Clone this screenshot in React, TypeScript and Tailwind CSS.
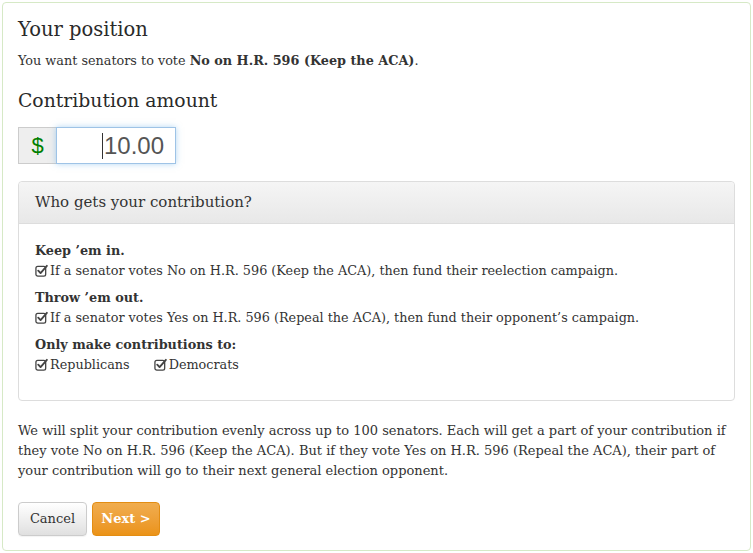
import React from "react";

const CheckIcon = () => (
  <svg width="13" height="13" viewBox="0 0 14 14" className="inline-block mr-[2px] -mt-[2px] align-middle" aria-hidden>
    <rect x="1" y="2.5" width="10.5" height="10.5" rx="2" fill="none" stroke="#444" strokeWidth="1.4" />
    <path d="M3.5 7.2 L6 9.8 L12.8 2" fill="none" stroke="#444" strokeWidth="2" strokeLinecap="round" strokeLinejoin="round" />
  </svg>
);

export default function App() {
  return (
    <div className="w-[753px] h-[553px] bg-white p-[2px] text-[#333]" style={{ fontFamily: '"DejaVu Serif", serif' }}>
      <div className="h-[549px] border border-[#d6e9c6] rounded-[4px] px-[15px] pt-[14px]">
        <h2 className="text-[19.5px] leading-[26px] text-[#2a2a2a]">Your position</h2>
        <p className="text-[12.8px] leading-[20px] mt-[8px]">
          You want senators to vote <b>No on H.R. 596 (Keep the ACA)</b>.
        </p>
        <h3 className="text-[18.8px] leading-[24px] mt-[18px] text-[#2a2a2a]">Contribution amount</h3>
        <div className="mt-[14px] flex w-[158px] h-[37px]">
          <div className="w-[38px] flex items-center justify-center bg-[#eeeeee] border border-[#ccc] border-r-0 text-[#008000] text-[22px]" style={{ fontFamily: '"Liberation Sans", sans-serif' }}>$</div>
          <div className="flex-1 flex items-center justify-end pr-[11px] border border-[#9ec3e6] shadow-[0_0_6px_rgba(102,175,233,0.5)] text-[#555] text-[24px]" style={{ fontFamily: '"Liberation Sans", sans-serif' }}>
            <span className="w-px h-[26px] bg-[#333] mr-[1px]" />10.00
          </div>
        </div>
        <div className="mt-[17px] w-[717px] border border-[#ddd] rounded-[4px]">
          <div className="h-[42px] bg-gradient-to-b from-[#f5f5f5] to-[#e8e8e8] border-b border-[#ddd] px-[16px] flex items-center text-[15px] rounded-t-[4px]">
            Who gets your contribution?
          </div>
          <div className="px-[16px] pt-[17px] pb-[25px] text-[12.8px] leading-[20px]">
            <div className="font-bold">Keep ’em in.</div>
            <div><CheckIcon />If a senator votes No on H.R. 596 (Keep the ACA), then fund their reelection campaign.</div>
            <div className="font-bold mt-[7px]">Throw ’em out.</div>
            <div><CheckIcon />If a senator votes Yes on H.R. 596 (Repeal the ACA), then fund their opponent’s campaign.</div>
            <div className="font-bold mt-[7px]">Only make contributions to:</div>
            <div className="flex gap-[24px]">
              <span><CheckIcon />Republicans</span>
              <span><CheckIcon />Democrats</span>
            </div>
          </div>
        </div>
        <p className="mt-[20px] text-[13px] leading-[20px] w-[717px]">
          We will split your contribution evenly across up to 100 senators. Each will get a part of your contribution if they vote No on H.R. 596 (Keep the ACA). But if they vote Yes on H.R. 596 (Repeal the ACA), their part of your contribution will go to their next general election opponent.
        </p>
        <div className="mt-[21px] flex gap-[5px]">
          <button className="h-[34px] w-[69px] text-[13px] border border-[#ccc] rounded-[4px] bg-gradient-to-b from-white to-[#e0e0e0] text-[#333] shadow-[0_1px_1px_rgba(0,0,0,0.05)]">Cancel</button>
          <button className="h-[34px] w-[68px] text-[13px] font-bold border border-[#e38d13] rounded-[4px] bg-gradient-to-b from-[#f0ad4e] to-[#eb9316] text-white">Next &gt;</button>
        </div>
      </div>
    </div>
  );
}
